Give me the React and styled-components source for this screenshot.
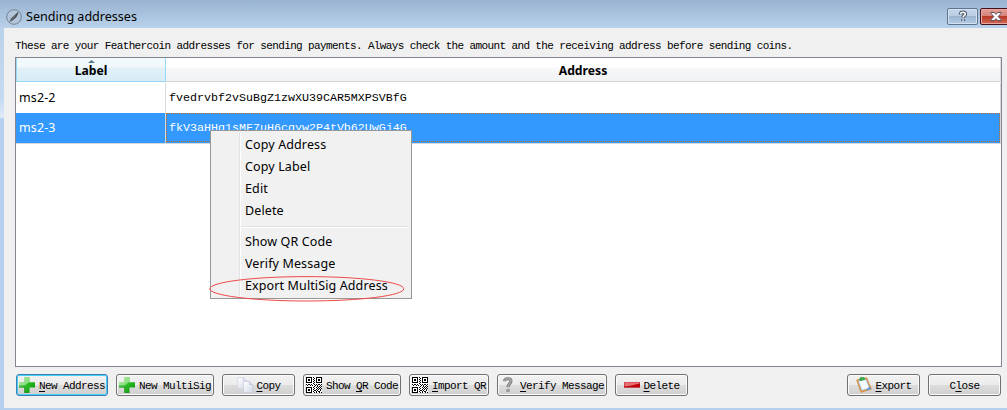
import React from "react";
import styled, { createGlobalStyle, css } from "styled-components";

const ui = `"Noto Sans", "Open Sans", sans-serif`;
const mono = `"Liberation Mono", monospace`;

const Global = createGlobalStyle`
  * { box-sizing: border-box; }
  body { margin: 0; overflow: hidden; background: #b9d1ea; }
`;

const Window = styled.div`
  display: flex;
  flex-direction: column;
  width: 1007px;
  height: 410px;
  padding: 0 0 2px 4px;
  background: linear-gradient(#9ab4d2 0, #b9d1ea 28px, #c6dbf0 100px, #dfebf8 117px, #b5d0ee 119px, #b5d0ee 100%);
  color: #000;
`;

const TitleBar = styled.header`
  display: flex;
  align-items: center;
  flex: 0 0 28px;
  margin-left: -4px;
  padding: 5px 0 0 6px;
  background: linear-gradient(#99b4d1, #b9d1ea);
`;

const Title = styled.h1`
  flex: 1;
  margin: 0 0 0 4px;
  font: 400 12.6px/20px ${ui};
  letter-spacing: -0.03px;
`;

const Caption = styled.button`
  display: flex;
  flex: 0 0 auto;
  align-items: center;
  justify-content: center;
  width: ${(p) => (p.$close ? "32px" : "31px")};
  height: 17px;
  margin: 0 ${(p) => (p.$close ? "-5px" : "2px")} 0 0;
  padding: 0;
  border: 1px solid ${(p) => (p.$close ? "#43101d" : "#5d7590")};
  border-radius: 2px;
  box-shadow: inset 0 0 0 1px ${(p) => (p.$close ? "#e9a79f" : "#d5e3f1")};
  background: ${(p) =>
    p.$close
      ? "linear-gradient(#e3a096 0, #d48378 48%, #b93a27 50%, #cf6c55 100%)"
      : "linear-gradient(#c5d6e9 0, #b8cce2 48%, #9cb6d2 50%, #b4cbe4 100%)"};
`;

const Body = styled.main`
  display: flex;
  flex: 1;
  flex-direction: column;
  padding: 9px 5px 0 11px;
  background: #f0f0f0;
`;

const Intro = styled.p`
  height: 20px;
  margin: 0;
  font: 11px/18px ${mono};
  letter-spacing: -0.62px;
  white-space: pre;
`;

const Table = styled.div`
  flex: 0 0 310px;
  width: 987px;
  border: 1px solid #828790;
  background: #fff;
`;

const Row = styled.div`
  display: grid;
  grid-template-columns: 150px 835px;
  height: 30px;
`;

const HeadRow = styled(Row)`
  height: 24px;
  margin-bottom: 1px;
`;

const HeadCell = styled.div`
  display: flex;
  flex-direction: column;
  align-items: center;
  border-right: 1px solid ${(p) => (p.$sorted ? "#96d9f9" : "#dedfe1")};
  border-bottom: 1px solid ${(p) => (p.$sorted ? "#96d9f9" : "#d5d5d5")};
  ${(p) => p.$sorted && css`border-left: 1px solid #96d9f9;`}
  padding-top: ${(p) => (p.$sorted ? "2px" : "5px")};
  background: ${(p) =>
    p.$sorted
      ? "linear-gradient(#f2f9fc 0 9px, #e1f1f9 10px, #d8ecf6 100%)"
      : "linear-gradient(#fff 0 9px, #f7f8fa 10px, #f1f2f4 100%)"};
  font: 700 12.2px/16px ${ui};

  svg { display: block; flex: 0 0 3px; }
`;

const Cell = styled.div`
  padding-left: 3px;
  border-right: 1px solid #d8d8d8;
  border-bottom: 1px solid #d8d8d8;
  background: ${(p) => (p.$selected ? "#3399ff" : "#fff")};
  color: ${(p) => (p.$selected ? "#fff" : "#000")};
  font: 12.5px/30px ${ui};
  letter-spacing: 0.1px;
  white-space: nowrap;
`;

const AddressCell = styled(Cell)`
  padding: ${(p) => (p.$selected ? "0" : "1px 0 0 3px")};
  font: 11.67px/29px ${mono};
  letter-spacing: 0;
`;

const FocusFrame = styled.div`
  height: 29px;
  padding-left: 2px;
  border: 1px dotted #c9691f;
  line-height: 29px;
`;

const Footer = styled.footer`
  display: flex;
  gap: 8px;
  padding: 7px 1px 0;
`;

const PushButton = styled.button`
  display: flex;
  flex: 0 0 ${(p) => p.$w}px;
  align-items: center;
  justify-content: center;
  gap: 4px;
  height: 22px;
  margin: 0 0 0 ${(p) => (p.$end ? "auto" : 0)};
  padding: 0;
  border: 1px solid ${(p) => (p.$default ? "#3c7fb1" : "#707070")};
  border-radius: 3px;
  box-shadow: inset 0 0 0 1px ${(p) => (p.$default ? "#45d0fa" : "#fbfbfb")};
  background: linear-gradient(#f2f2f2 0, #ebebeb 49%, #dddddd 50%, #cfcfcf 100%);
  color: #000;
  font: 11px/18px ${mono};
  letter-spacing: -0.602px;
  white-space: pre;

  svg { flex: 0 0 16px; }
  span { padding-top: 1px; }
  u { text-underline-offset: 2px; text-decoration-thickness: 1px; text-decoration-skip-ink: none; }
`;

const Menu = styled.div`
  position: absolute;
  left: 210px;
  top: 130px;
  width: 202px;
  height: 169px;
  padding: 3px 2px;
  border: 1px solid #979797;
  background: linear-gradient(90deg, transparent 28px, #e2e3e3 28px 29px, #fff 29px 30px, transparent 30px) 0 2px / 100% 163px no-repeat #f1f1f1;
`;

const MenuItem = styled.div`
  height: 22px;
  padding-left: 32px;
  font: 12.5px/22px ${ui};
  letter-spacing: 0.12px;
  white-space: nowrap;
`;

const Separator = styled.div`
  height: 2px;
  margin: 4px 1px 3px 28px;
  border-top: 1px solid #e0e0e0;
  border-bottom: 1px solid #fff;
`;

const Highlight = styled.svg`
  position: absolute;
  left: 208px;
  top: 275px;
`;

const AppIcon = () => (
  <svg width="16" height="16" viewBox="0 0 16 16">
    <circle cx="8" cy="8" r="7.3" fill="#b2c5da" stroke="#77828e" />
    <path d="M3.5 13 5 9.5 12 3l.5.8-2 4.2-3.7 3.2Z" fill="#414950" />
    <path d="m3.5 13 6-6.5" stroke="#8c98a4" strokeWidth=".6" />
  </svg>
);

const HelpGlyph = () => (
  <svg width="10" height="13" viewBox="0 0 10 13" fill="none">
    <path d="M2.7 4.5V3.8C2.7 1.7 7.3 1.7 7.3 4c0 1.7-2.2 1.7-2.2 3.7M5.1 9.3v1.6" stroke="#48566a" strokeWidth="3.6" />
    <path d="M2.7 4.2V3.8C2.7 1.7 7.3 1.7 7.3 4c0 1.7-2.2 1.7-2.2 3.4M5.1 9.5v1.2" stroke="#fff" strokeWidth="1.6" />
  </svg>
);

const CloseGlyph = () => (
  <svg width="12" height="11" viewBox="0 0 12 11">
    <path d="M1 1.5h3.3L6 3.4l1.7-1.9H11v1L8.2 5.5 11 8.6v1H7.7L6 7.7 4.3 9.6H1v-1l2.8-3.1L1 2.5Z" fill="#fff" stroke="#59465a" />
  </svg>
);

const PlusIcon = () => (
  <svg width="16" height="16" viewBox="0 0 16 16">
    <defs>
      <linearGradient id="plus" x1="0" y1="0" x2="1" y2="1">
        <stop offset="0" stopColor="#9be78e" />
        <stop offset=".5" stopColor="#29bd24" />
        <stop offset="1" stopColor="#098d09" />
      </linearGradient>
    </defs>
    <path d="M5.3 0h5.2v5.3H16v5.2h-5.5V16H5.3v-5.5H0V5.3h5.3Z" fill="url(#plus)" />
    <path d="M5.3 0h5.2v5.3c-2.4 0-2.7 3-5.2 3H0v-3h5.3Z" fill="#bff0b6" opacity=".6" />
    <path d="M0 10.1h5.7v5.5h4.8" fill="none" stroke="#35893a" strokeWidth=".7" />
  </svg>
);

const CopyIcon = () => (
  <svg width="16" height="16" viewBox="0 0 16 16">
    <defs>
      <linearGradient id="sheet" x1="0" y1="0" x2="1" y2="1">
        <stop offset="0" stopColor="#fff" />
        <stop offset="1" stopColor="#d3d9e6" />
      </linearGradient>
    </defs>
    <path d="M.7.7h6l3 3v7.8h-9Z" fill="url(#sheet)" stroke="#ccd2e0" strokeWidth=".7" />
    <path d="M6.7.7v3h3" fill="#e1e5ef" stroke="#bfc7d8" strokeWidth=".7" />
    <path d="M6.5 4.5h6l3 3v8h-9Z" fill="url(#sheet)" stroke="#c4ccdc" strokeWidth=".7" />
    <path d="M12.5 4.5v3h3" fill="#d6dce9" stroke="#b8c1d3" strokeWidth=".7" />
  </svg>
);

const QR = [
  "111111.1..111111",
  "1....1..1.1....1",
  "1.11.1.1..1.11.1",
  "1.11.1..1.1.11.1",
  "1....1.1..1....1",
  "111111..1.111111",
  ".......1........",
  "1.11.1..1.1.11.1",
  ".1..1.1..1.1..1.",
  "........1..1.1.1",
  "111111.1..1.1.1.",
  "1....1..1..1.1.1",
  "1.11.1.1..1.1.1.",
  "1.11.1..11.1..1.",
  "1....1.1..1.11..",
  "111111..1.1..1.1",
];

const QrIcon = () => (
  <svg width="16" height="16" viewBox="0 0 16 16" shapeRendering="crispEdges">
    <rect width="16" height="16" fill="#fff" />
    <path
      d={QR.map((line, y) => [...line].map((c, x) => (c === "1" ? `M${x} ${y}h1v1h-1z` : "")).join("")).join("")}
      fill="#000"
    />
  </svg>
);

const QuestionIcon = () => (
  <svg width="16" height="16" viewBox="0 0 16 16" fill="none">
    <path d="M4.7 4.3V3.2C5.8 1 11 1 11 4c0 2.8-3 2.6-3 6.2M8 12.3v2.5" stroke="#777" strokeWidth="3" />
    <path d="M4.7 4V3.3C5.8 1.1 11 1.2 11 4c0 2.5-3 2.7-3 5.9M8 12.6v1.8" stroke="#aaa" strokeWidth="1.4" />
  </svg>
);

const MinusIcon = () => (
  <svg width="16" height="16" viewBox="0 0 16 16">
    <path d="M0 5.3h16v5.2H0Z" fill="#c5000d" />
    <path d="M.4 5.7h15.2v1.4c-5 0-8 2.3-15.2 2.3Z" fill="#ee8c8e" opacity=".8" />
    <path d="M.3 10.1h15.4V5.6" fill="none" stroke="#a70914" strokeWidth=".6" />
  </svg>
);

const ExportIcon = () => (
  <svg width="16" height="16" viewBox="0 0 16 16">
    <path d="m.7 3 10-2.2 4.6 11.3L5 15.3Z" fill="#f0a040" stroke="#d9781c" strokeWidth=".7" />
    <path d="m2.2 3.8 7.7-1.7 3.8 9L5.8 13.5Z" fill="#f4faff" stroke="#7eacdc" strokeWidth=".7" />
    <path d="m10 13.8 5.1-1.8-2-2.6Z" fill="#5a9add" />
    <path d="m3.6 2.4.5-1.7L7.6.2l1.1 1.3-.2 1.3-4.4.9Z" fill="#36b54a" stroke="#218539" strokeWidth=".5" />
  </svg>
);

export default function App() {
  return (
    <Window>
      <Global />
      <TitleBar>
        <AppIcon />
        <Title>Sending addresses</Title>
        <Caption aria-label="Help"><HelpGlyph /></Caption>
        <Caption $close aria-label="Close window"><CloseGlyph /></Caption>
      </TitleBar>
      <Body>
        <Intro>These are your Feathercoin addresses for sending payments. Always check the amount and the receiving address before sending coins.</Intro>
        <Table>
          <HeadRow>
            <HeadCell $sorted>
              <svg width="7" height="3" viewBox="0 0 7 3"><path d="M0 3 3.5 0 7 3Z" fill="#527c91" /></svg>
              Label
            </HeadCell>
            <HeadCell>Address</HeadCell>
          </HeadRow>
          <Row>
            <Cell>ms2-2</Cell>
            <AddressCell>fvedrvbf2vSuBgZ1zwXU39CAR5MXPSVBfG</AddressCell>
          </Row>
          <Row>
            <Cell $selected>ms2-3</Cell>
            <AddressCell $selected><FocusFrame>fkV3aHHq1sMF7uH6cqyw2P4tVb62UwGj4G</FocusFrame></AddressCell>
          </Row>
        </Table>
        <Footer>
          <PushButton $w={92} $default><PlusIcon /><span><u>N</u>ew Address</span></PushButton>
          <PushButton $w={98}><PlusIcon /><span>New MultiSig</span></PushButton>
          <PushButton $w={73}><CopyIcon /><span><u>C</u>opy</span></PushButton>
          <PushButton $w={98}><QrIcon /><span>Show <u>Q</u>R Code</span></PushButton>
          <PushButton $w={80}><QrIcon /><span><u>I</u>mport QR</span></PushButton>
          <PushButton $w={110}><QuestionIcon /><span><u>V</u>erify Message</span></PushButton>
          <PushButton $w={73}><MinusIcon /><span><u>D</u>elete</span></PushButton>
          <PushButton $w={73} $end><ExportIcon /><span><u>E</u>xport</span></PushButton>
          <PushButton $w={73}><span>C<u>l</u>ose</span></PushButton>
        </Footer>
      </Body>
      <Menu>
        <MenuItem>Copy Address</MenuItem>
        <MenuItem>Copy Label</MenuItem>
        <MenuItem>Edit</MenuItem>
        <MenuItem>Delete</MenuItem>
        <Separator />
        <MenuItem>Show QR Code</MenuItem>
        <MenuItem>Verify Message</MenuItem>
        <MenuItem>Export MultiSig Address</MenuItem>
      </Menu>
      <Highlight width="198" height="27" viewBox="0 0 198 27">
        <ellipse cx="98.8" cy="13.8" rx="97" ry="12.2" fill="none" stroke="#f04848" />
      </Highlight>
    </Window>
  );
}
